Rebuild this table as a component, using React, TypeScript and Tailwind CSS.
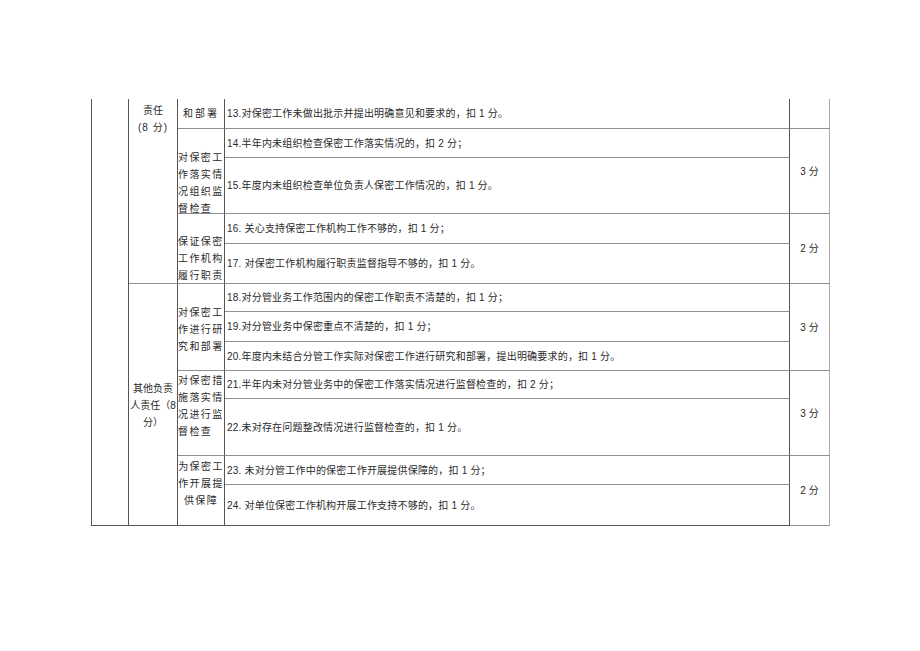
const FONT = "font-['Liberation_Sans','Noto_Sans_CJK_SC',sans-serif]";

type CellProps = {
  col: string;
  row: string;
  className?: string;
  children?: React.ReactNode;
};

function Cell({ col, row, className = "", children }: CellProps) {
  return <div className={`${col} ${row} border-r border-b border-r-[#555] border-b-[#8f8f8f] ${className}`}>{children}</div>;
}

// multi-line label in the narrow third column
function Label({ lines, center = false, pt }: { lines: string[]; center?: boolean; pt: string }) {
  return (
    <div className={`flex h-full flex-col ${pt} ${center ? "items-center" : "items-start"}`}>
      {lines.map((line) => (
        <div key={line} className="whitespace-nowrap leading-[17px] tracking-[1.4px]">
          {line}
        </div>
      ))}
    </div>
  );
}

const ROWS: [string, string][] = [
  ["row-start-1", "13.对保密工作未做出批示并提出明确意见和要求的，扣 1 分。"],
  ["row-start-2", "14.半年内未组织检查保密工作落实情况的，扣 2 分；"],
  ["row-start-3", "15.年度内未组织检查单位负责人保密工作情况的，扣 1 分。"],
  ["row-start-4", "16. 关心支持保密工作机构工作不够的，扣 1 分；"],
  ["row-start-5", "17. 对保密工作机构履行职责监督指导不够的，扣 1 分。"],
  ["row-start-6", "18.对分管业务工作范围内的保密工作职责不清楚的，扣 1 分；"],
  ["row-start-7", "19.对分管业务中保密重点不清楚的，扣 1 分；"],
  ["row-start-8", "20.年度内未结合分管工作实际对保密工作进行研究和部署，提出明确要求的，扣 1 分。"],
  ["row-start-9", "21.半年内未对分管业务中的保密工作落实情况进行监督检查的，扣 2 分；"],
  ["row-start-10", "22.未对存在问题整改情况进行监督检查的，扣 1 分。"],
  ["row-start-11", "23. 未对分管工作中的保密工作开展提供保障的，扣 1 分；"],
  ["row-start-12", "24. 对单位保密工作机构开展工作支持不够的，扣 1 分。"],
];

export default function App() {
  return (
    <div className={`h-[651px] w-[920px] overflow-hidden bg-white pt-[99px] pl-[91px] text-[10px] text-[#2a2a2a] ${FONT}`}>
      <div className="grid w-[739px] grid-cols-[37px_49px_47px_565px_40px] grid-rows-[30px_29px_56px_30px_40px_28px_30px_29px_28px_57px_29px_41px] border-l border-[#555]">
        {/* first column: one cell over every row */}
        <Cell col="col-start-1" row="row-start-1 row-span-12" className="border-b-[#555]" />

        <Cell col="col-start-2" row="row-start-1 row-span-5">
          <div className="flex flex-col items-center pt-[3px] leading-[17px]">
            <div>责任</div>
            <div className="tracking-[1px]">(8 分)</div>
          </div>
        </Cell>
        <Cell col="col-start-2" row="row-start-6 row-span-7" className="border-b-[#555]">
          <div className="flex flex-col items-center pt-[96px] leading-[17px]">
            <div>其他负责</div>
            <div>人责任（8</div>
            <div>分）</div>
          </div>
        </Cell>

        <Cell col="col-start-3" row="row-start-1">
          <div className="flex h-full items-center justify-center tracking-[2px]">和部署</div>
        </Cell>
        <Cell col="col-start-3" row="row-start-2 row-span-2">
          <Label lines={["对保密工", "作落实情", "况组织监", "督检查"]} pt="pt-[20px]" />
        </Cell>
        <Cell col="col-start-3" row="row-start-4 row-span-2">
          <Label lines={["保证保密", "工作机构", "履行职责"]} pt="pt-[19px]" />
        </Cell>
        <Cell col="col-start-3" row="row-start-6 row-span-3">
          <Label lines={["对保密工", "作进行研", "究和部署"]} pt="pt-[20px]" />
        </Cell>
        <Cell col="col-start-3" row="row-start-9 row-span-2">
          <Label lines={["对保密措", "施落实情", "况进行监", "督检查"]} pt="pt-[1px]" />
        </Cell>
        <Cell col="col-start-3" row="row-start-11 row-span-2" className="border-b-[#555]">
          <Label lines={["为保密工", "作开展提", "供保障"]} center pt="pt-[2px]" />
        </Cell>

        {ROWS.map(([row, text]) => (
          <Cell key={row} col="col-start-4" row={row} className={row === "row-start-12" ? "border-b-[#555]" : ""}>
            <div className="flex h-full items-center whitespace-nowrap pl-[2px] tracking-[0.2px]">{text}</div>
          </Cell>
        ))}

        {[
          ["row-start-1", ""],
          ["row-start-2 row-span-2", "3 分"],
          ["row-start-4 row-span-2", "2 分"],
          ["row-start-6 row-span-3", "3 分"],
          ["row-start-9 row-span-2", "3 分"],
          ["row-start-11 row-span-2", "2 分"],
        ].map(([row, score]) => (
          <Cell key={row} col="col-start-5" row={row} className="border-r-[#aaa]">
            <div className="flex h-full items-center justify-center">{score}</div>
          </Cell>
        ))}
      </div>
    </div>
  );
}
